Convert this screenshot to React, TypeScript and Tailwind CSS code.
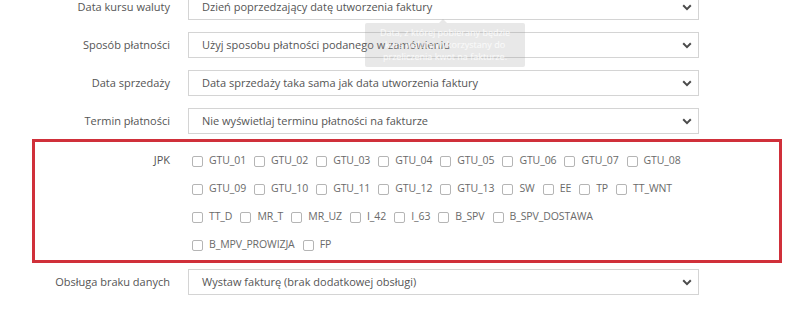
import React from "react";

const font = { fontFamily: '"Open Sans", "Noto Sans", sans-serif' };

function Chevron() {
  return (
    <svg width="10" height="7" viewBox="0 0 10 7" className="shrink-0">
      <path d="M1.2 1.3 5 5.1 8.8 1.3" fill="none" stroke="#4b4b4b" strokeWidth="2" />
    </svg>
  );
}

function SelectRow({ label, value }: { label: string; value: string }) {
  return (
    <div className="flex items-center">
      <div className="w-[170px] shrink-0 text-right text-[11px] text-[#555]">{label}</div>
      <div className="ml-[18px] flex h-[26px] w-[511px] items-center justify-between border border-[#d4d4d4] bg-white pl-[13px] pr-[6px]">
        <span className="text-[11px] text-[#555]">{value}</span>
        <Chevron />
      </div>
    </div>
  );
}

function Check({ name }: { name: string }) {
  return (
    <label className="mr-[8px] flex items-center">
      <span className="h-[11px] w-[11px] rounded-[2px] border border-[#b5b5b5] bg-white" />
      <span className="ml-[6px] text-[10.5px] tracking-[-0.1px] text-[#6a6a6a]">{name}</span>
    </label>
  );
}

const jpkRows = [
  ["GTU_01", "GTU_02", "GTU_03", "GTU_04", "GTU_05", "GTU_06", "GTU_07", "GTU_08"],
  ["GTU_09", "GTU_10", "GTU_11", "GTU_12", "GTU_13", "SW", "EE", "TP", "TT_WNT"],
  ["TT_D", "MR_T", "MR_UZ", "I_42", "I_63", "B_SPV", "B_SPV_DOSTAWA"],
  ["B_MPV_PROWIZJA", "FP"],
];

export default function App() {
  return (
    <div className="h-[310px] w-[802px] overflow-hidden bg-white" style={font}>
      <div className="relative -mt-[6px] flex flex-col">
        <div className="flex flex-col gap-[12px]">
          <SelectRow label="Data kursu waluty" value="Dzień poprzedzający datę utworzenia faktury" />
          <SelectRow label="Sposób płatności" value="Użyj sposobu płatności podanego w zamówieniu" />
          <SelectRow label="Data sprzedaży" value="Data sprzedaży taka sama jak data utworzenia faktury" />
          <SelectRow label="Termin płatności" value="Nie wyświetlaj terminu płatności na fakturze" />
        </div>

        {/* fading tooltip over the second select */}
        <div className="absolute left-[365px] top-[29px] w-[160px] rounded-[2px] bg-[rgba(150,150,150,0.22)] px-[8px] py-[4px] text-center text-[9px] leading-[12px] text-white/80">
          <span className="absolute -top-[4px] left-[74px] h-0 w-0 border-x-[4px] border-b-[4px] border-x-transparent border-b-[rgba(150,150,150,0.22)]" />
          Data, z której pobierany będzie kurs waluty wykorzystany do przeliczenia kwot na fakturze.
        </div>

        <div className="ml-[32px] mt-[5px] flex h-[124px] w-[750px] border-[3px] border-[#d0303a] pt-[5px]">
          <div className="w-[135px] shrink-0 pt-[6px] text-right text-[11px] leading-[14px] text-[#555]">JPK</div>
          <div className="ml-[22px] flex flex-col">
            {jpkRows.map((row, i) => (
              <div key={i} className="flex h-[28px] items-center">
                {row.map((n) => (
                  <Check key={n} name={n} />
                ))}
              </div>
            ))}
          </div>
        </div>

        <div className="mt-[6px]">
          <SelectRow label="Obsługa braku danych" value="Wystaw fakturę (brak dodatkowej obsługi)" />
        </div>
      </div>
    </div>
  );
}
